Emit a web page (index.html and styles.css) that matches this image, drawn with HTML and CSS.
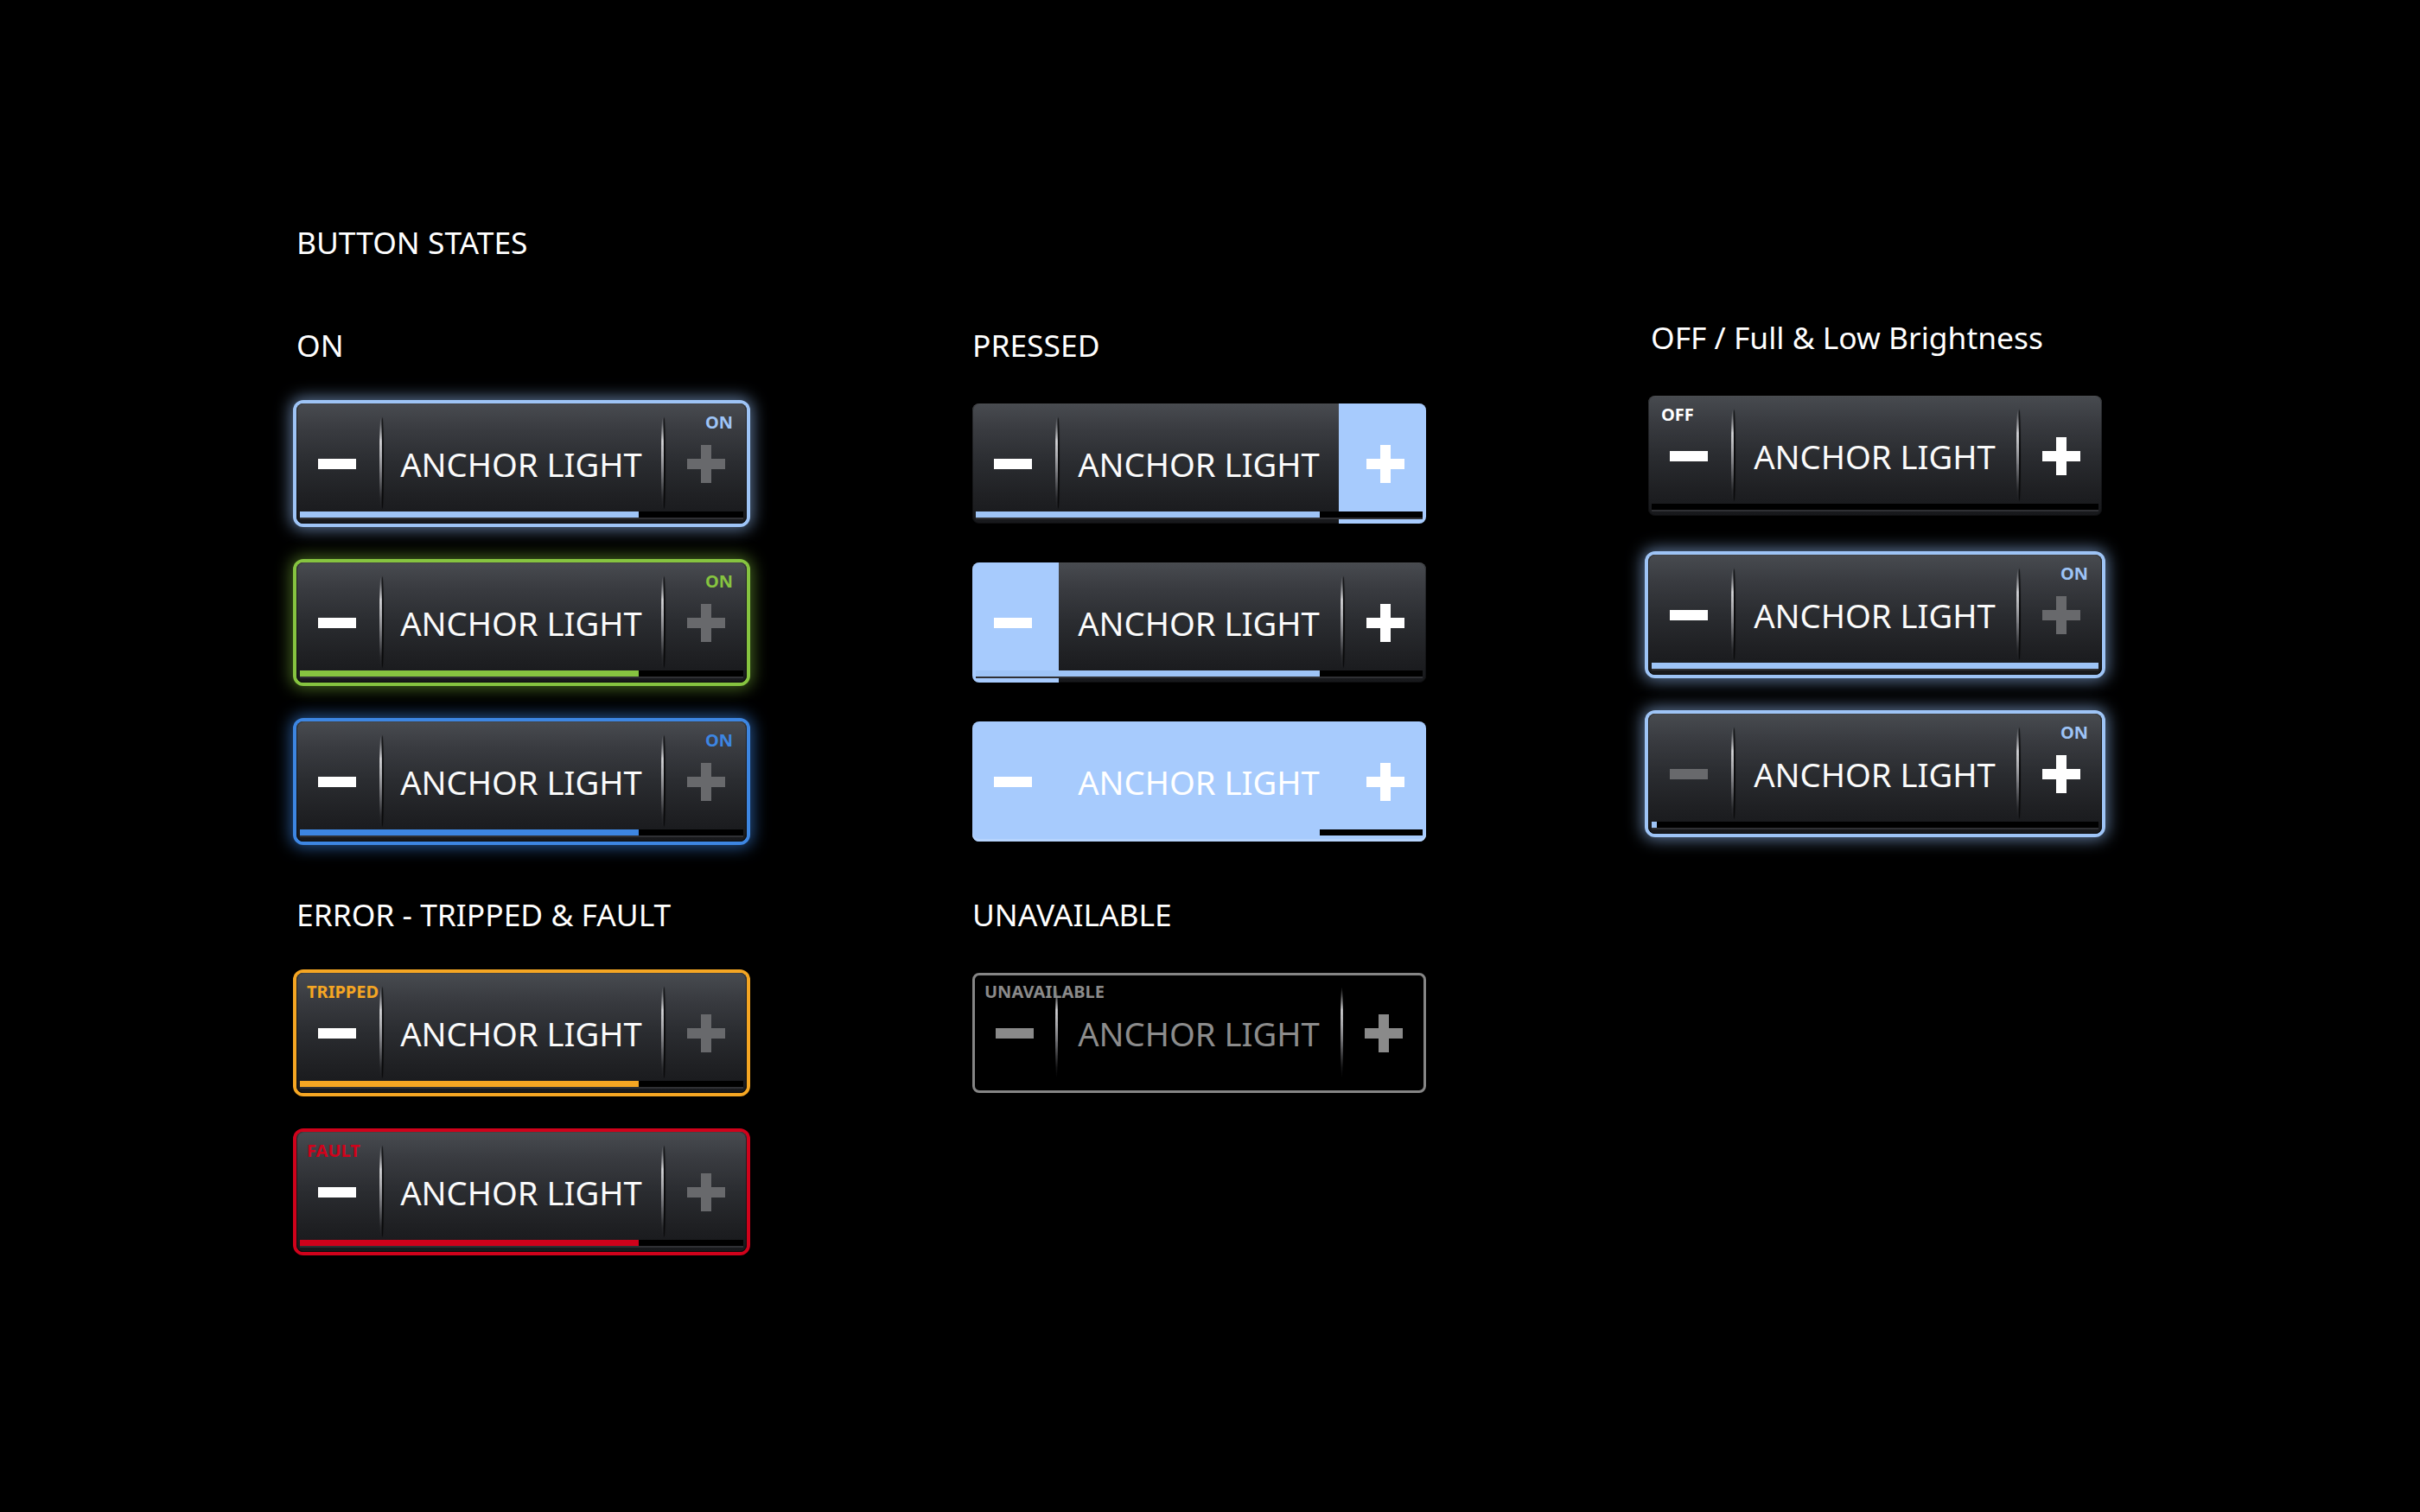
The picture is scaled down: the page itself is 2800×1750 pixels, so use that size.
FILE: index.html
```html
<!DOCTYPE html>
<html lang="en">
<head>
<meta charset="utf-8">
<title>Button States</title>
<link rel="stylesheet" href="styles.css">
</head>
<body>
<div class="page">
  <h1 class="title">BUTTON STATES</h1>
  <div class="cols">
    <section class="col col1">
      <h2 class="head">ON</h2>

      <div class="btn ring v-blue">
        <div class="seg seg-l"><svg class="ico" viewBox="0 0 44 44"><rect x="0" y="16" width="44" height="12"/></svg></div>
        <div class="sep sep-l"></div>
        <div class="name">ANCHOR LIGHT</div>
        <div class="sep sep-r"></div>
        <div class="seg seg-r dim"><svg class="ico" viewBox="0 0 44 44"><rect x="0" y="16" width="44" height="12"/><rect x="16" y="0" width="12" height="44"/></svg></div>
        <div class="bar"><div class="fill" style="width:76.5%"></div></div>
        <span class="tag tag-r">ON</span>
      </div>

      <div class="btn ring v-green">
        <div class="seg seg-l"><svg class="ico" viewBox="0 0 44 44"><rect x="0" y="16" width="44" height="12"/></svg></div>
        <div class="sep sep-l"></div>
        <div class="name">ANCHOR LIGHT</div>
        <div class="sep sep-r"></div>
        <div class="seg seg-r dim"><svg class="ico" viewBox="0 0 44 44"><rect x="0" y="16" width="44" height="12"/><rect x="16" y="0" width="12" height="44"/></svg></div>
        <div class="bar"><div class="fill" style="width:76.5%"></div></div>
        <span class="tag tag-r">ON</span>
      </div>

      <div class="btn ring v-deep">
        <div class="seg seg-l"><svg class="ico" viewBox="0 0 44 44"><rect x="0" y="16" width="44" height="12"/></svg></div>
        <div class="sep sep-l"></div>
        <div class="name">ANCHOR LIGHT</div>
        <div class="sep sep-r"></div>
        <div class="seg seg-r dim"><svg class="ico" viewBox="0 0 44 44"><rect x="0" y="16" width="44" height="12"/><rect x="16" y="0" width="12" height="44"/></svg></div>
        <div class="bar"><div class="fill" style="width:76.5%"></div></div>
        <span class="tag tag-r">ON</span>
      </div>

      <h2 class="head head-gap">ERROR - TRIPPED &amp; FAULT</h2>

      <div class="btn ring flat v-orange">
        <div class="seg seg-l"><svg class="ico" viewBox="0 0 44 44"><rect x="0" y="16" width="44" height="12"/></svg></div>
        <div class="sep sep-l"></div>
        <div class="name">ANCHOR LIGHT</div>
        <div class="sep sep-r"></div>
        <div class="seg seg-r dim"><svg class="ico" viewBox="0 0 44 44"><rect x="0" y="16" width="44" height="12"/><rect x="16" y="0" width="12" height="44"/></svg></div>
        <div class="bar"><div class="fill" style="width:76.5%"></div></div>
        <span class="tag tag-l">TRIPPED</span>
      </div>

      <div class="btn ring flat v-red">
        <div class="seg seg-l"><svg class="ico" viewBox="0 0 44 44"><rect x="0" y="16" width="44" height="12"/></svg></div>
        <div class="sep sep-l"></div>
        <div class="name">ANCHOR LIGHT</div>
        <div class="sep sep-r"></div>
        <div class="seg seg-r dim"><svg class="ico" viewBox="0 0 44 44"><rect x="0" y="16" width="44" height="12"/><rect x="16" y="0" width="12" height="44"/></svg></div>
        <div class="bar"><div class="fill" style="width:76.5%"></div></div>
        <span class="tag tag-l">FAULT</span>
      </div>
    </section>

    <section class="col">
      <h2 class="head">PRESSED</h2>

      <div class="btn v-blue">
        <div class="seg seg-l"><svg class="ico" viewBox="0 0 44 44"><rect x="0" y="16" width="44" height="12"/></svg></div>
        <div class="sep sep-l"></div>
        <div class="name">ANCHOR LIGHT</div>
        <div class="seg seg-r pressed-r"><svg class="ico" viewBox="0 0 44 44"><rect x="0" y="16" width="44" height="12"/><rect x="16" y="0" width="12" height="44"/></svg></div>
        <div class="bar"><div class="fill" style="width:77%"></div></div>
      </div>

      <div class="btn v-blue">
        <div class="seg seg-l pressed-l"><svg class="ico" viewBox="0 0 44 44"><rect x="0" y="16" width="44" height="12"/></svg></div>
        <div class="name">ANCHOR LIGHT</div>
        <div class="sep sep-r"></div>
        <div class="seg seg-r"><svg class="ico" viewBox="0 0 44 44"><rect x="0" y="16" width="44" height="12"/><rect x="16" y="0" width="12" height="44"/></svg></div>
        <div class="bar"><div class="fill" style="width:77%"></div></div>
      </div>

      <div class="btn v-blue all-pressed">
        <div class="seg seg-l"><svg class="ico" viewBox="0 0 44 44"><rect x="0" y="16" width="44" height="12"/></svg></div>
        <div class="name">ANCHOR LIGHT</div>
        <div class="seg seg-r"><svg class="ico" viewBox="0 0 44 44"><rect x="0" y="16" width="44" height="12"/><rect x="16" y="0" width="12" height="44"/></svg></div>
        <div class="bar"><div class="fill" style="width:77%"></div></div>
      </div>

      <h2 class="head head-gap">UNAVAILABLE</h2>

      <div class="btn unavailable">
        <div class="seg seg-l"><svg class="ico" viewBox="0 0 44 44"><rect x="0" y="16" width="44" height="12"/></svg></div>
        <div class="sep sep-l"></div>
        <div class="name">ANCHOR LIGHT</div>
        <div class="sep sep-r"></div>
        <div class="seg seg-r"><svg class="ico" viewBox="0 0 44 44"><rect x="0" y="16" width="44" height="12"/><rect x="16" y="0" width="12" height="44"/></svg></div>
        <span class="tag tag-l">UNAVAILABLE</span>
      </div>
    </section>

    <section class="col col3">
      <h2 class="head head-c3">OFF / Full &amp; Low Brightness</h2>

      <div class="btn v-white">
        <div class="seg seg-l"><svg class="ico" viewBox="0 0 44 44"><rect x="0" y="16" width="44" height="12"/></svg></div>
        <div class="sep sep-l"></div>
        <div class="name">ANCHOR LIGHT</div>
        <div class="sep sep-r"></div>
        <div class="seg seg-r"><svg class="ico" viewBox="0 0 44 44"><rect x="0" y="16" width="44" height="12"/><rect x="16" y="0" width="12" height="44"/></svg></div>
        <div class="bar"><div class="fill" style="width:0%"></div></div>
        <span class="tag tag-l tag-off">OFF</span>
      </div>

      <div class="btn ring v-blue">
        <div class="seg seg-l"><svg class="ico" viewBox="0 0 44 44"><rect x="0" y="16" width="44" height="12"/></svg></div>
        <div class="sep sep-l"></div>
        <div class="name">ANCHOR LIGHT</div>
        <div class="sep sep-r"></div>
        <div class="seg seg-r dim"><svg class="ico" viewBox="0 0 44 44"><rect x="0" y="16" width="44" height="12"/><rect x="16" y="0" width="12" height="44"/></svg></div>
        <div class="bar"><div class="fill" style="width:100%"></div></div>
        <span class="tag tag-r">ON</span>
      </div>

      <div class="btn ring v-blue">
        <div class="seg seg-l dim"><svg class="ico" viewBox="0 0 44 44"><rect x="0" y="16" width="44" height="12"/></svg></div>
        <div class="sep sep-l"></div>
        <div class="name">ANCHOR LIGHT</div>
        <div class="sep sep-r"></div>
        <div class="seg seg-r"><svg class="ico" viewBox="0 0 44 44"><rect x="0" y="16" width="44" height="12"/><rect x="16" y="0" width="12" height="44"/></svg></div>
        <div class="bar"><div class="fill" style="width:1.2%"></div></div>
        <span class="tag tag-r">ON</span>
      </div>
    </section>
  </div>
</div>
</body>
</html>
```
FILE: styles.css
```css
* { box-sizing: border-box; margin: 0; padding: 0; }

html, body { background: #000; }

body {
  width: 2800px;
  height: 1750px;
  overflow: hidden;
  font-family: "Noto Sans", "Open Sans", "DejaVu Sans", sans-serif;
  color: #fff;
}

.page {
  padding: 257px 0 0 343px;
}

.title,
.head {
  font-size: 35.4px;
  line-height: 46px;
  font-weight: 400;
  color: #fff;
}

.cols {
  display: grid;
  grid-template-columns: repeat(3, 525px);
  column-gap: 257px;
  align-items: start;
  margin-top: 73px;
}

.col {
  display: flex;
  flex-direction: column;
  gap: 45px;
}

.col1 .btn { width: 521px; }

.col3 { margin-top: -9px; }

.head-c3 { padding-left: 3px; }

.head-gap { margin-top: 16px; }

/* ---------- button ---------- */

.btn {
  --c: #9ec4f6;
  position: relative;
  height: 139px;
  border-radius: 8px;
  overflow: hidden;
  display: grid;
  grid-template-columns: 94px 6px 1fr 6px 95px;
  grid-template-rows: 14px 111px 7px 7px;
  background: linear-gradient(180deg, #484b50 0%, #393b40 22%, #2a2c30 50%, #1f2023 78%, #17181b 100%);
  box-shadow: inset 0 1px 0 rgba(255, 255, 255, 0.14), inset 0 0 0 1px rgba(0, 0, 0, 0.35);
  color: #fff;
}

.v-blue   { --c: #9ec4f6; --glow: rgba(150, 190, 245, 0.6); }
.v-green  { --c: #86c440; --glow: rgba(134, 196, 64, 0.5); }
.v-deep   { --c: #3d86e2; --glow: rgba(61, 134, 226, 0.6); }
.v-orange { --c: #f5a623; }
.v-red    { --c: #d0021b; }
.v-white  { --c: #ffffff; }

.btn.ring {
  box-shadow:
    inset 0 1px 0 rgba(255, 255, 255, 0.14),
    inset 0 0 0 1px rgba(0, 0, 0, 0.5),
    0 0 0 4px var(--c),
    0 0 18px 7px var(--glow);
}

.btn.ring.flat {
  box-shadow:
    inset 0 1px 0 rgba(255, 255, 255, 0.14),
    inset 0 0 0 1px rgba(0, 0, 0, 0.5),
    0 0 0 4px var(--c);
}

.seg {
  grid-row: 2;
  display: flex;
  align-items: center;
  justify-content: center;
}

.seg-l { grid-column: 1; }
.seg-r { grid-column: 5; }

.ico {
  width: 44px;
  height: 44px;
  fill: currentColor;
}

.dim { color: #68696c; }

.sep {
  grid-row: 2;
  justify-self: center;
  width: 3px;
  margin: 2px 0 3px;
  border-radius: 50%;
  background: linear-gradient(180deg,
    rgba(255, 255, 255, 0) 0%,
    rgba(225, 225, 228, 0.95) 26%,
    rgba(160, 160, 165, 0.7) 60%,
    rgba(80, 80, 85, 0.25) 88%,
    rgba(0, 0, 0, 0) 100%);
  box-shadow: 2px 0 1px rgba(0, 0, 0, 0.75);
}

.sep-l { grid-column: 2; }
.sep-r { grid-column: 4; }

.name {
  grid-row: 2;
  grid-column: 3;
  display: flex;
  align-items: center;
  justify-content: center;
  font-size: 38.2px;
  font-weight: 400;
  white-space: nowrap;
  color: #fbfbfb;
}

.bar {
  grid-row: 3;
  grid-column: 1 / -1;
  margin: 0 4px;
  background: #000;
  box-shadow: 0 2px 0 #2f3034;
  position: relative;
  z-index: 1;
}

.fill {
  height: 100%;
  background: var(--c);
}

/* ---------- pressed ---------- */

.pressed-r,
.pressed-l {
  grid-row: 1 / -1;
  background: #a7cbfd;
  color: #fff;
}

.pressed-r { grid-column: 4 / 6; padding-left: 6px; }
.pressed-l { grid-column: 1 / 3; padding-right: 6px; }

.all-pressed {
  background: #a7cbfd;
  box-shadow: inset 0 -3px 0 #b6d4fd;
}

.all-pressed .name { color: #fff; }
.all-pressed .fill { background: #a7cbfd; }
.all-pressed .bar { box-shadow: none; }

/* ---------- unavailable ---------- */

.unavailable {
  background: #000;
  border: 3px solid #858585;
  box-shadow: none;
  grid-template-rows: 11px 111px 7px 4px;
  grid-template-columns: 91px 6px 1fr 6px 92px;
  color: #8a8a8a;
}

.unavailable .name { color: #8c8c8c; }

/* ---------- tags ---------- */

.tag {
  position: absolute;
  top: 12px;
  font-size: 20px;
  line-height: 20px;
  font-weight: 700;
  color: var(--c);
  z-index: 2;
}

.tag-r { right: 16px; }
.tag-l { left: 12px; }
.tag-off { left: 15px; }

.unavailable .tag { color: #8a8a8a; top: 9px; left: 11px; }
```
